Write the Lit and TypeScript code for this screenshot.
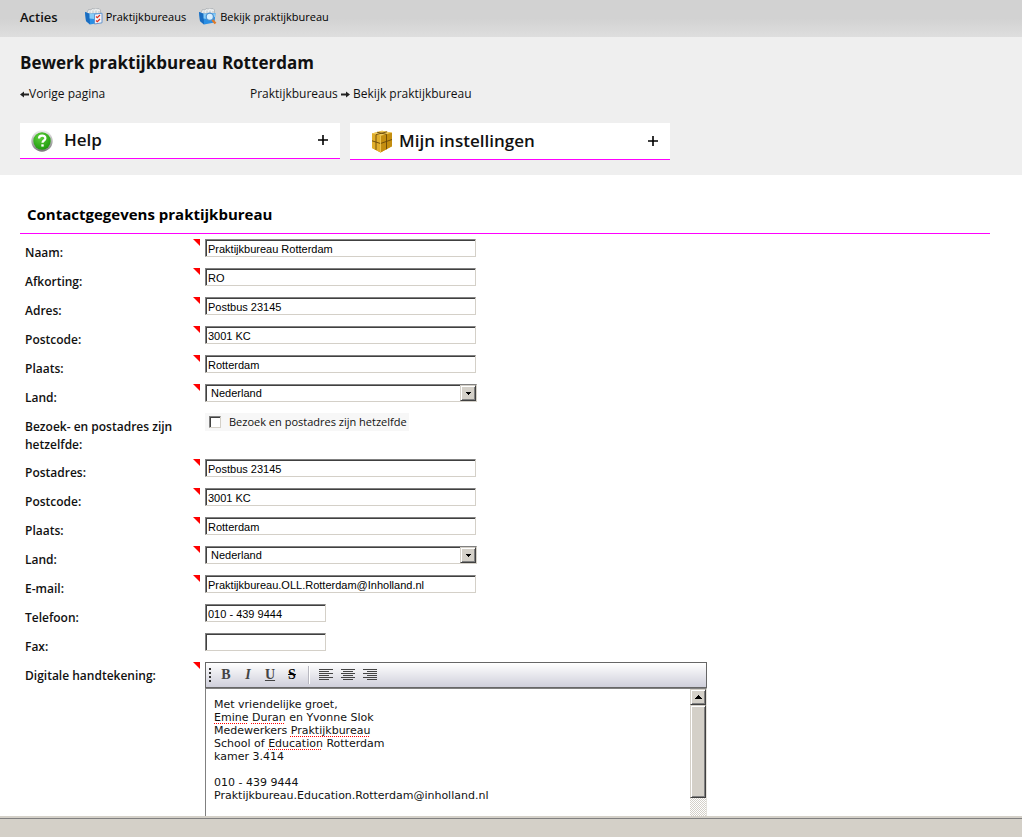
import { LitElement, html, css, svg, nothing } from "lit";
import { customElement, property } from "lit/decorators.js";

interface Field {
  id: string;
  label: string;
  kind: "text" | "select" | "check";
  value: string;
  required?: boolean;
  short?: boolean;
}

const FIELDS: Field[] = [
  { id: "naam", label: "Naam:", kind: "text", value: "Praktijkbureau Rotterdam", required: true },
  { id: "afkorting", label: "Afkorting:", kind: "text", value: "RO", required: true },
  { id: "adres", label: "Adres:", kind: "text", value: "Postbus 23145", required: true },
  { id: "postcode", label: "Postcode:", kind: "text", value: "3001 KC", required: true },
  { id: "plaats", label: "Plaats:", kind: "text", value: "Rotterdam", required: true },
  { id: "land", label: "Land:", kind: "select", value: "Nederland", required: true },
  { id: "hetzelfde", label: "Bezoek- en postadres zijn hetzelfde:", kind: "check", value: "Bezoek en postadres zijn hetzelfde" },
  { id: "postadres", label: "Postadres:", kind: "text", value: "Postbus 23145", required: true },
  { id: "post-postcode", label: "Postcode:", kind: "text", value: "3001 KC", required: true },
  { id: "post-plaats", label: "Plaats:", kind: "text", value: "Rotterdam", required: true },
  { id: "post-land", label: "Land:", kind: "select", value: "Nederland", required: true },
  { id: "email", label: "E-mail:", kind: "text", value: "Praktijkbureau.OLL.Rotterdam@Inholland.nl", required: true },
  { id: "telefoon", label: "Telefoon:", kind: "text", value: "010 - 439 9444", short: true },
  { id: "fax", label: "Fax:", kind: "text", value: "", short: true },
];

const folder = svg`
  <path d="M2 5L3.500 1.500 6 2l1-1.500 2.500.5 1-1 2.500.8 1-.3 1.500 1.500V6H3z" fill="#eceeef" stroke="#a4a9ae" stroke-width=".7"/>
  <path d="M5 3.500v2M8 2.500v3M11 2.500v3M14 3v3" stroke="#b4b9be" stroke-width=".8"/>
  <path d="M0 4l4.500 1.800L16.500 5l-1 9.500L5 16.500 1 13z" fill="#2a8fe4"/>
  <path d="M0 4l4.500 1.800L5 16.500 1 13z" fill="#1a6cc0"/>
  <path d="M4.500 6l12-.7-.4 3.500c-4 2.700-8 2.400-11.500 1.700z" fill="#86ccf8"/>`;

const listIcon = html`<svg class="icon" width="18" height="17" viewBox="0 0 18 17" aria-hidden="true">
  ${folder}
  <path d="M9.500 6.200l7.500-1v9.600l-7.500 1.200z" fill="#f2f5fa" stroke="#5b8fcc" stroke-width=".9"/>
  <path d="M11 8.500l1.300 1.200L15 7M11 12.500l1.300 1.200L15 11" fill="none" stroke="#e0301e" stroke-width="1.200"/>
</svg>`;

const viewIcon = html`<svg class="icon" width="18" height="17" viewBox="0 0 18 17" aria-hidden="true">
  ${folder}
  <path d="M13.200 11.800l3.300 3.700" stroke="#e07a28" stroke-width="2.300"/>
  <circle cx="10.800" cy="8.700" r="3.600" fill="#d8efff" stroke="#4d90d0" stroke-width="1.200"/>
</svg>`;

const helpIcon = html`<svg width="22" height="22" viewBox="0 0 22 22" aria-hidden="true">
  <defs>
    <linearGradient id="ring" x1="0" y1="0" x2="0" y2="1"><stop offset="0" stop-color="#f0f0f0"/><stop offset="1" stop-color="#777"/></linearGradient>
    <radialGradient id="green" cx=".4" cy=".3" r=".8"><stop offset="0" stop-color="#5fd03c"/><stop offset="1" stop-color="#179407"/></radialGradient>
  </defs>
  <circle cx="11" cy="11" r="10.700" fill="url(#ring)"/>
  <circle cx="11" cy="11" r="8.700" fill="url(#green)"/>
  <path d="M8 8.600c0-4 6.400-3.800 6.400-.4 0 2.400-2.900 2.200-2.900 4.600" fill="none" stroke="#fff" stroke-width="2.200"/>
  <rect x="10.300" y="14.300" width="2.400" height="2.300" fill="#fff"/>
</svg>`;

const boxIcon = html`<svg width="22" height="23" viewBox="0 0 22 23" aria-hidden="true">
  <path d="M1 3.500L11 .8l10 2v13.500L9.500 22.500 1 18z" fill="#d9a21a"/>
  <path d="M1 3.500L11 .8l10 2L9.500 6z" fill="#efc95a"/>
  <path d="M9.500 6L21 2.800v13.500L9.500 22.500z" fill="#c48e10"/>
  <path d="M1 3.500L9.500 6v16.500L1 18z" fill="#e0ae2c"/>
  <path d="M1 10.800l8.500 2.700L21 9.500M5 4.700v15.200M15.500 4.400v14.900M5 4.700L16 1.800M15.500 4.400L6 2.200" fill="none" stroke="#6a4808" stroke-width=".9"/>
  <path d="M9.500 6v16.500" stroke="#f0cc60" stroke-width=".8"/>
</svg>`;

const arrow = (left: boolean) => html`<svg class="arrow" width="9" height="7" viewBox="0 0 9 7" aria-hidden="true">
  <path d=${left ? "M0 3.500L4 .5v2h5v2H4v2z" : "M9 3.500L5 .5v2H0v2h5v2z"} fill="#222"/>
</svg>`;

@customElement("icon-panel")
export class IconPanel extends LitElement {
  @property() heading = "";
  @property() icon = "help";

  static styles = css`
    :host { display: block; flex: 0 1 320px; background: #fff; border-bottom: 1px solid #f0f; }
    .panel {
      display: flex; align-items: center; width: 100%; height: 35px; padding: 1px 12px 0 11px;
      border: 0; background: none; box-sizing: border-box; text-align: left;
      font: 600 17px/24px "Open Sans", sans-serif; color: #111;
    }
    .panel.box { height: 36px; padding-left: 21px; }
    .title { flex: 1; padding: 0 0 2px 11px; }
    .box .title { padding-left: 6px; }
    svg { display: block; }
    .plus { margin-bottom: 2px; }
  `;

  render() {
    const box = this.icon === "box";
    return html`<button type="button" class="panel ${box ? "box" : ""}" aria-expanded="false">
      ${box ? boxIcon : helpIcon}
      <span class="title">${this.heading}</span>
      <svg class="plus" width="10" height="10" viewBox="0 0 10 10" aria-hidden="true">
        <path d="M0 5h10M5 0v10" stroke="#000" stroke-width="1.600"/>
      </svg>
    </button>`;
  }
}

@customElement("signature-editor")
export class SignatureEditor extends LitElement {
  static styles = css`
    :host { display: block; max-width: 502px; }
    .toolbar {
      display: flex; align-items: center; height: 26px; box-sizing: border-box; padding-left: 3px;
      border: 1px solid #666; background: linear-gradient(#fff, #cfcfdb);
    }
    .grip { width: 2px; height: 14px; margin-right: 4px; background: repeating-linear-gradient(#333 0 2px, transparent 2px 4px); }
    button { border: 0; background: none; padding: 0; width: 22px; height: 22px; display: grid; place-items: center;
      font: bold 14px/22px "Liberation Serif", serif; color: #444; }
    .italic { font-style: italic; }
    .under { text-decoration: underline; }
    .strike { text-decoration: line-through; color: #000; }
    .rule { width: 1px; height: 18px; margin: 0 5px; background: #b8b8c0; border-right: 1px solid #fff; }
    .frame { display: flex; height: 220px; border: 1px solid #808080; border-right-color: #e4e2dc; box-sizing: border-box; }
    .body { flex: 1; padding: 9px 8px; font: 11px/13px "DejaVu Sans", sans-serif; color: #111; outline: 0; }
    p { margin: 0; min-height: 13px; }
    .misspelt { text-decoration: underline dotted #f00 1px; text-underline-offset: 2px; text-decoration-skip-ink: none; }
    .scroll { width: 16px; display: flex; flex-direction: column;
      background: repeating-conic-gradient(#d4d0c8 0 25%, #fff 0 50%) 0 0 / 2px 2px; }
    .raised { box-sizing: border-box; background: #d4d0c8; border: 1px solid; border-color: #d4d0c8 #404040 #404040 #d4d0c8;
      box-shadow: inset 1px 1px #fff, inset -1px -1px #808080; }
    .up { width: 16px; height: 16px; }
    .thumb { height: 93px; }
  `;

  private align(side: string, short: string) {
    return html`<button type="button" aria-label=${side}>
      <svg width="14" height="12" viewBox="0 0 14 12">
        <path d="M0 .5h14M0 4.500h14M0 8.500h14" stroke="#444"/>
        <path d=${short} stroke="#444"/>
      </svg></button>`;
  }

  render() {
    return html`
      <div class="toolbar" role="toolbar">
        <span class="grip"></span>
        <button type="button" aria-label="Vet">B</button>
        <button type="button" class="italic" aria-label="Cursief">I</button>
        <button type="button" class="under" aria-label="Onderstrepen">U</button>
        <button type="button" class="strike" aria-label="Doorhalen">S</button>
        <span class="rule"></span>
        ${this.align("Links", "M0 2.500h10M0 6.500h10M0 10.500h10")}
        ${this.align("Midden", "M2 2.500h10M2 6.500h10M2 10.500h10")}
        ${this.align("Rechts", "M4 2.500h10M4 6.500h10M4 10.500h10")}
      </div>
      <div class="frame">
        <div class="body" contenteditable="true" spellcheck="false" role="textbox" aria-multiline="true" aria-label="Digitale handtekening">
          <p>Met vriendelijke groet,</p>
          <p><span class="misspelt">Emine</span> <span class="misspelt">Duran</span> en Yvonne Slok</p>
          <p>Medewerkers <span class="misspelt">Praktijkbureau</span></p>
          <p>School of <span class="misspelt">Education</span> Rotterdam</p>
          <p>kamer 3.414</p>
          <p></p>
          <p>010 - 439 9444</p>
          <p>Praktijkbureau.Education.Rotterdam@inholland.nl</p>
        </div>
        <div class="scroll">
          <button type="button" class="raised up" aria-label="Omhoog">
            <svg width="7" height="4" viewBox="0 0 7 4"><path d="M3 0h1v1h1v1h1v1h1v1H0V3h1V2h1V1h1z"/></svg>
          </button>
          <div class="raised thumb"></div>
        </div>
      </div>`;
  }
}

@customElement("app-root")
export class AppRoot extends LitElement {
  static styles = css`
    :host { display: flex; flex-direction: column; height: 100vh; background: #fff; color: #111;
      font: 12px/18px "Open Sans", sans-serif; }
    a { color: inherit; text-decoration: none; }
    .actions { display: flex; align-items: center; flex: none; height: 37px; padding: 0 20px 4px; box-sizing: border-box;
      background: linear-gradient(#d2d2d2, #d2d2d2 50%, #dedede); font-size: 11px; }
    .actions strong { font-size: 13px; font-weight: 600; margin-right: 27px; }
    .actions a { display: flex; align-items: center; gap: 3px; margin-right: 13px; color: #000; }
    .icon { flex: none; }
    .head { flex: none; height: 138px; box-sizing: border-box; background: #efefef; padding: 14px 20px 0; }
    h1 { margin: 0; font-size: 17px; line-height: 24px; font-weight: 700; }
    .crumbs { display: flex; margin: 10px 0 20px; }
    .back { flex: none; width: 230px; }
    .panels { display: flex; align-items: flex-start; gap: 10px; }
    main { flex: 1; min-height: 0; overflow: hidden; padding: 27px 32px 0 20px; }
    h2 { margin: 0 0 5px; padding: 0 7px; border-bottom: 1px solid #f0f; padding-bottom: 7px; font-size: 15px; line-height: 24px; font-weight: 700; color: #000; }
    .row { display: grid; grid-template-columns: 168px 12px 1fr; padding-left: 5px; min-height: 29px; align-items: start; }
    .row.tall { min-height: 46px; }
    .label { padding-top: 5px; font-weight: 600; line-height: 18px; }
    .mark { display: block; width: 7px; height: 7px; background: #f00; clip-path: polygon(0 0, 100% 0, 100% 100%); }
    .text, select { box-sizing: border-box; height: 18px; width: 100%; max-width: 271px; padding: 1px 2px 0; border: 1px solid;
      border-color: #808080 #d4d0c8 #d4d0c8 #808080; border-radius: 0; box-shadow: inset 1px 1px #404040; background: #fff;
      font: 11px/15px "Liberation Sans", sans-serif; color: #000; outline: 0; display: block; }
    .text.short { max-width: 121px; }
    .pick { display: grid; max-width: 272px; }
    .pick > * { grid-area: 1 / 1; }
    select { appearance: none; max-width: none; padding: 1px 20px 0 5px; }
    .drop { justify-self: end; align-self: end; margin: 0 1px 1px 0; width: 16px; height: 16px; box-sizing: border-box; display: grid; place-items: center; pointer-events: none;
      background: #d4d0c8; border: 1px solid; border-color: #d4d0c8 #404040 #404040 #d4d0c8; box-shadow: inset 1px 1px #fff, inset -1px -1px #808080; }
    .check { display: inline-flex; align-items: center; justify-self: start; height: 18px; padding: 0 2px 0 4px; gap: 8px; background: #f7f7f7; font-size: 11px; }
    .check input { appearance: none; margin: 0; width: 12px; height: 12px; background: #fff; border: 1px solid;
      border-color: #808080 #d4d0c8 #d4d0c8 #808080; box-shadow: inset 1px 1px #404040; }
    footer { flex: none; height: 21px; box-sizing: border-box; background: #d4d0c8; padding-top: 2px; }
    .line { height: 1px; background: #808080; }
  `;

  private control(f: Field) {
    if (f.kind === "select")
      return html`<div class="pick">
        <select id=${f.id}><option>${f.value}</option></select>
        <span class="drop"><svg width="5" height="3" viewBox="0 0 5 3"><path d="M0 0h5v1H4v1H3v1H2V2H1V1H0z"/></svg></span>
      </div>`;
    if (f.kind === "check")
      return html`<label class="check"><input type="checkbox" id=${f.id} />${f.value}</label>`;
    return html`<input class="text ${f.short ? "short" : ""}" type="text" id=${f.id} .value=${f.value} />`;
  }

  render() {
    return html`
      <nav class="actions">
        <strong>Acties</strong>
        <a href="#">${listIcon}Praktijkbureaus</a>
        <a href="#">${viewIcon}Bekijk praktijkbureau</a>
      </nav>
      <header class="head">
        <h1>Bewerk praktijkbureau Rotterdam</h1>
        <div class="crumbs">
          <span class="back"><a href="#">${arrow(true)}Vorige pagina</a></span>
          <span><a href="#">Praktijkbureaus</a> ${arrow(false)} <a href="#">Bekijk praktijkbureau</a></span>
        </div>
        <div class="panels">
          <icon-panel heading="Help"></icon-panel>
          <icon-panel heading="Mijn instellingen" icon="box"></icon-panel>
        </div>
      </header>
      <main>
        <h2>Contactgegevens praktijkbureau</h2>
        <form>
          ${FIELDS.map(
            (f) => html`<div class="row ${f.kind === "check" ? "tall" : ""}">
              <label class="label" for=${f.id}>${f.label}</label>
              <span>${f.required ? html`<span class="mark"></span>` : nothing}</span>
              ${this.control(f)}
            </div>`
          )}
          <div class="row">
            <span class="label">Digitale handtekening:</span>
            <span class="mark"></span>
            <signature-editor></signature-editor>
          </div>
        </form>
      </main>
      <footer><div class="line"></div></footer>`;
  }
}
